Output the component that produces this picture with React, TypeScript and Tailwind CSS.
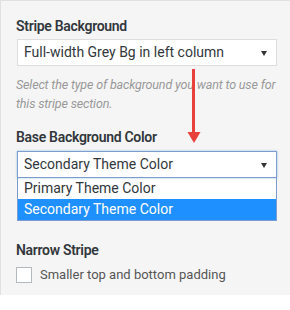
import React from "react";

function Caret() {
  return (
    <svg width="6" height="5" viewBox="0 0 6 5" className="absolute right-[9px] top-[11px]">
      <path d="M0 0 H6 L3 5 Z" fill="#333" />
    </svg>
  );
}

export default function App() {
  const font = { fontFamily: 'Roboto, "Noto Sans", sans-serif' };
  return (
    <div className="w-[290px] h-[310px] bg-white relative" style={font}>
      <div className="h-[295px] bg-[#f5f5f5] border-l border-t border-[#e0e0e0] pl-[15px] pr-[13px] pt-[15px]">
        <div className="text-[14px] leading-[20px] font-semibold tracking-[-0.3px] text-[#32373c]">Stripe Background</div>
        <div className="relative mt-[3px] ml-[1px] h-[27px] border border-[#ddd] bg-white pl-[6px] text-[14px] leading-[25px] text-[#32373c]">
          Full-width Grey Bg in left column
          <Caret />
        </div>
        <div className="mt-[9px] text-[12.5px] leading-[19px] italic tracking-[-0.15px] text-[#999]">
          Select the type of background you want to use for this stripe section.
        </div>
        <div className="mt-[14px] text-[14px] leading-[20px] font-semibold tracking-[-0.3px] text-[#32373c]">Base Background Color</div>
        <div className="relative mt-[4px] ml-[1px] h-[27px] border border-[#7e9ccf] shadow-[0_0_2px_rgba(30,140,190,0.5)] bg-white pl-[6px] text-[14px] leading-[25px] text-[#32373c]">
          Secondary Theme Color
          <Caret />
        </div>
        <div className="ml-[1px] border border-t-0 border-[#7e9ccf] bg-white text-[14px] leading-[21px]">
          <div className="pl-[6px] text-[#32373c]">Primary Theme Color</div>
          <div className="pl-[6px] bg-[#1e90ff] text-white">Secondary Theme Color</div>
        </div>
        <div className="mt-[19px] text-[14px] leading-[20px] font-semibold tracking-[-0.3px] text-[#32373c]">Narrow Stripe</div>
        <label className="mt-[5px] flex items-center gap-[8px] text-[13px] text-[#555]">
          <span className="w-[16px] h-[16px] border border-[#b4b9be] bg-white shrink-0" />
          Smaller top and bottom padding
        </label>
      </div>
      <svg width="14" height="75" viewBox="0 0 14 75" className="absolute left-[187px] top-[69px]">
        <rect x="5" y="0" width="3" height="64" fill="#e8403a" />
        <path d="M0.5 63 H13.5 L7 74 Z" fill="#e8403a" />
      </svg>
    </div>
  );
}
